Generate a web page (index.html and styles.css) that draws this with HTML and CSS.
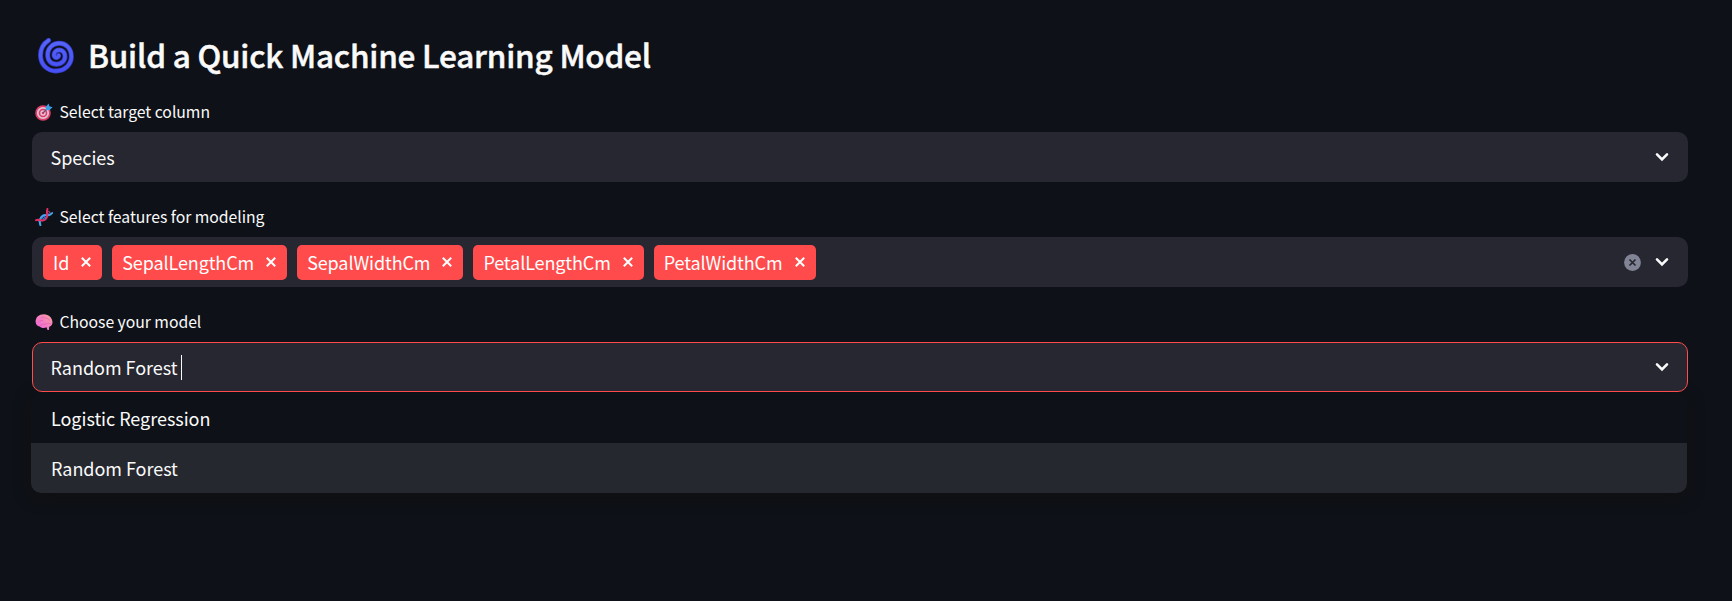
FILE: index.html
```html
<!DOCTYPE html>
<html lang="en">
<head>
<meta charset="utf-8">
<title>Build a Quick Machine Learning Model</title>
<link rel="stylesheet" href="styles.css">
</head>
<body>
<svg class="defs" width="0" height="0" aria-hidden="true">
  <defs>
    <symbol id="chevron" viewBox="0 0 14 10"><path d="M2 2.4l5 5 5-5" fill="none" stroke="#fafafa" stroke-width="2.6" stroke-linecap="round" stroke-linejoin="miter"/></symbol>
    <symbol id="cross" viewBox="0 0 10 10"><path d="M.8.8l8.4 8.4M9.2.8L.8 9.2" fill="none" stroke="#fff" stroke-width="2"/></symbol>
    <path id="spiral" d="M10.6 2.4C5 6 2.4 11.5 2.5 17.5C2.7 26.5 9.2 33 17.8 33C26.8 33 33.4 26.6 33.4 18.6C33.4 10.6 28 5.2 21.2 5.2C14.4 5.2 9.6 10.4 9.6 16.8C9.6 22.6 13.4 26.2 18.4 26.2C23.6 26.2 27 22.6 27 18.4C27 14.6 24.6 12 21.2 12C18.2 12 16 14.2 16 16.8C16 18.8 17.4 19.8 18.8 19.6C20 19.4 20.8 18.4 20.6 17.4" fill="none" stroke-linecap="round"/>
  </defs>
</svg>
<main class="page">
  <h3 class="title">
    <svg class="cyclone" viewBox="0 0 36 36">
      <defs><linearGradient id="swirl" x2="0" y2="1"><stop stop-color="#5566f8"/><stop offset="1" stop-color="#484ff5"/></linearGradient></defs>
      <use href="#spiral" stroke="#363cc4" stroke-width="4.9"/>
      <use href="#spiral" stroke="url(#swirl)" stroke-width="3.4"/>
    </svg>
    <span>Build a Quick Machine Learning Model</span>
  </h3>

  <section class="field">
    <div class="label">
      <svg class="emoji" viewBox="0 0 18 18">
        <circle cx="8" cy="10" r="7.8" fill="#dd3d68"/>
        <circle cx="8" cy="10" r="5.2" fill="none" stroke="#dfc3d5" stroke-width="1.8"/>
        <circle cx="8" cy="10" r="2" fill="none" stroke="#e5c7d8" stroke-width="1.4"/>
        <path d="M8 10L13 5" stroke="#7b4770" stroke-width="1.2"/>
        <path d="M10.6 7.2L11 3.6 13.6.6 14.4 3.3 17.6 4.3 14.6 7z" fill="#3a9ee6"/>
      </svg>
      <span>Select target column</span>
    </div>
    <div class="control">
      <span class="value">Species</span>
      <svg class="chevron"><use href="#chevron"/></svg>
    </div>
  </section>

  <section class="field">
    <div class="label">
      <svg class="emoji" viewBox="0 0 18 18" fill="none">
        <path d="M2.6 11.6l3.4 4M4.6 10.6l2.8 2.8M11.2 3.6l3 3.2M13.4 2.8l2 2.6" stroke="#96508f" stroke-width="1.2"/>
        <path d="M5.4 17.2C4.2 13.6 4.8 10.6 7 8.4C9 6.6 10.4 7.6 12.6 7.4C14.6 7.2 16.2 6.4 17.2 5" stroke="#3fa6ea" stroke-width="2" stroke-linecap="round"/>
        <path d="M1 12.2C3 10.8 4.6 12.4 6.8 12.4C9 12.4 11 11.4 11.8 9.4C12.8 6.8 11.2 4.4 12.4 1" stroke="#e02f63" stroke-width="2" stroke-linecap="round"/>
        <path d="M6 9.6C7 8.2 8.2 7.2 10 7.2" stroke="#4fa4ee" stroke-width="2" stroke-linecap="round"/>
        <path d="M8.2 8.2L10.8 10.2M6.8 9.4l3 2.2" stroke="#3d7fd8" stroke-width="1.1"/>
      </svg>
      <span>Select features for modeling</span>
    </div>
    <div class="control multi">
      <div class="tags">
        <span class="tag">Id<svg class="cross"><use href="#cross"/></svg></span>
        <span class="tag">SepalLengthCm<svg class="cross"><use href="#cross"/></svg></span>
        <span class="tag">SepalWidthCm<svg class="cross"><use href="#cross"/></svg></span>
        <span class="tag">PetalLengthCm<svg class="cross"><use href="#cross"/></svg></span>
        <span class="tag">PetalWidthCm<svg class="cross"><use href="#cross"/></svg></span>
      </div>
      <svg class="clear" viewBox="0 0 17 17"><circle cx="8.5" cy="8.5" r="8.4" fill="#808495"/><path d="M5.5 5.5l6 6M11.5 5.5l-6 6" stroke="#262730" stroke-width="1.7"/></svg>
      <svg class="chevron"><use href="#chevron"/></svg>
    </div>
  </section>

  <section class="field">
    <div class="label">
      <svg class="emoji" viewBox="0 0 18 18">
        <defs><linearGradient id="pink" x1="1" x2="0" y2="1"><stop stop-color="#f6a59c"/><stop offset=".55" stop-color="#f57cc4"/><stop offset="1" stop-color="#ed5ee0"/></linearGradient></defs>
        <path d="M.6 8.8C.5 4 4 1.2 8.8 1.2C14 1.2 17.6 5 17.5 9.6C17.5 11.8 16 13.6 14.2 13.8L14 17L12.2 16.8L11.6 14.2C9 15.4 6 15 4.8 13.4C2.4 13.6.7 11.2.6 8.8z" fill="url(#pink)"/>
        <path d="M3.4 8.8C4.8 7 7 8.2 8.4 7M6 5C7.4 3.6 9.6 3.8 10.6 5.2C12 4.6 13.6 5.6 14 7.2M5 12.4C7 10.4 10 11.8 12.4 10.6C13.8 10 15.6 10.8 16.4 11.2" fill="none" stroke="#dc5fb4" stroke-width=".7" stroke-linecap="round"/>
      </svg>
      <span>Choose your model</span>
    </div>
    <div class="control focused">
      <span class="value">Random Forest</span><span class="caret"></span>
      <svg class="chevron"><use href="#chevron"/></svg>
    </div>
    <ul class="menu">
      <li class="option">Logistic Regression</li>
      <li class="option selected">Random Forest</li>
    </ul>
  </section>
</main>
</body>
</html>
```
FILE: styles.css
```css
* { box-sizing: border-box; }
body {
  margin: 0;
  height: 601px;
  overflow: hidden;
  background: #0e1117;
  color: #fafafa;
  font-family: "Noto Sans CJK SC", "Noto Sans", sans-serif;
  font-size: 18px;
}
svg { display: block; flex: none; }
.defs { position: absolute; }
.page { padding: 32px 44px 0 32px; }
.title {
  display: flex;
  align-items: center;
  height: 48px;
  margin: 0;
  padding-left: 6px;
  font-size: 31.5px;
  font-weight: 500;
  line-height: 44px;
  letter-spacing: -0.21px;
  -webkit-text-stroke: 0.5px #fafafa;
  white-space: nowrap;
}
.title span { padding-bottom: 4px; }
.cyclone { width: 36px; height: 36px; margin-right: 14px; }
.field { padding-top: 20px; }
.field + .field { padding-top: 23px; }
.label {
  display: flex;
  align-items: center;
  height: 24px;
  margin-bottom: 8px;
  padding-left: 3px;
  font-size: 15.75px;
  line-height: 24px;
  letter-spacing: -0.03px;
}
.emoji { width: 18px; height: 18px; margin-right: 6.5px; }
.control {
  display: flex;
  align-items: center;
  height: 50px;
  padding: 0 19px 0 18.5px;
  border-radius: 10px;
  background: #262730;
}
.control.focused {
  position: relative;
  z-index: 1;
  border: 1px solid #ff4b4b;
  padding: 0 18px 0 17.5px;
}
.value { letter-spacing: -0.03px; }
.chevron { width: 14px; height: 10px; margin-left: auto; }
.caret { width: 1px; height: 25px; margin-left: 3px; background: #fafafa; }
.control.multi { padding-left: 11px; }
.tags { display: flex; gap: 10px; }
.tag {
  display: flex;
  align-items: center;
  height: 35px;
  padding: 0 11px 0 10px;
  border-radius: 5px;
  background: #ff4b4b;
  color: #fff;
  letter-spacing: -0.11px;
}
.cross { width: 10px; height: 10px; margin-left: 12px; }
.clear { width: 17px; height: 17px; margin-left: auto; }
.clear + .chevron { margin-left: 14px; }
.menu {
  list-style: none;
  margin: 1px 1px 0 -1px;
  padding: 0;
  overflow: hidden;
  border-radius: 10px;
  box-shadow: 0 4px 16px rgba(16, 16, 16, 0.85);
}
.option { height: 50px; padding: 0 20px; line-height: 50px; letter-spacing: -0.04px; background: #0e1117; }
.option.selected { background: #262830; }
```
